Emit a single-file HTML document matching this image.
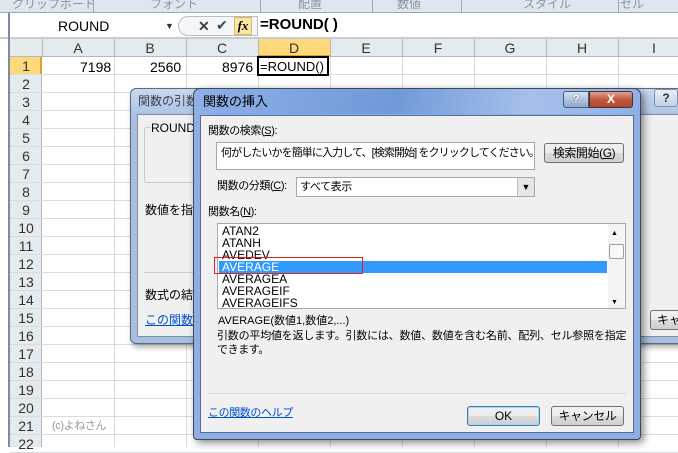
<!DOCTYPE html>
<html><head><meta charset="utf-8"><style>
*{margin:0;padding:0;box-sizing:border-box}
body{width:678px;height:447px;overflow:hidden;background:#fff;font-family:"Liberation Sans","Noto Sans CJK JP",sans-serif;font-size:12px;color:#000;position:relative}
.a{position:absolute}
.t{position:absolute;white-space:nowrap;line-height:14px}
.j{font-size:11px;letter-spacing:-0.4px}
.btn{position:absolute;border:1px solid #707070;border-radius:3px;background:linear-gradient(#f2f2f2,#ebebeb 50%,#dddddd 51%,#cfcfcf);text-align:center;font-size:12px}
</style></head><body>
<div class="a" style="left:0;top:0;width:678px;height:13px;background:#dfe6ee;border-bottom:1px solid #a0a8b2"></div>
<div class="t" style="left:12px;top:-3px;color:#8a94a0">クリップボード</div>
<div class="t" style="left:150px;top:-3px;color:#8a94a0">フォント</div>
<div class="t" style="left:298px;top:-3px;color:#8a94a0">配置</div>
<div class="t" style="left:397px;top:-3px;color:#8a94a0">数値</div>
<div class="t" style="left:523px;top:-3px;color:#8a94a0">スタイル</div>
<div class="t" style="left:620px;top:-3px;color:#8a94a0">セル</div>
<div class="a" style="left:93px;top:0;width:1px;height:13px;background:#a0a8b2"></div>
<div class="a" style="left:260px;top:0;width:1px;height:13px;background:#a0a8b2"></div>
<div class="a" style="left:372px;top:0;width:1px;height:13px;background:#a0a8b2"></div>
<div class="a" style="left:461px;top:0;width:1px;height:13px;background:#a0a8b2"></div>
<div class="a" style="left:618px;top:0;width:1px;height:13px;background:#a0a8b2"></div>
<div class="a" style="left:0;top:13px;width:678px;height:26px;background:#fff;border-bottom:2px solid #c8ccd2"></div>
<div class="a" style="left:8px;top:13px;width:2px;height:434px;background:#7f8ba0"></div>
<div class="t" style="left:58px;top:19px;font-size:14px">ROUND</div>
<div class="t" style="left:165px;top:19px;font-size:9px;color:#333">▼</div>
<div class="a" style="left:178px;top:16px;width:80px;height:20px;border:1px solid #b8bec8;border-radius:10px 0 0 10px;background:#f4f6f8"></div>
<div class="t" style="left:198px;top:19px;font-size:14px;color:#444;font-weight:bold">✕</div>
<div class="t" style="left:216px;top:18px;font-size:14px;color:#444">✔</div>
<div class="a" style="left:234px;top:17px;width:18px;height:18px;background:#fbe7a1;border:1px solid #d8b860;font-family:'Liberation Serif',serif;font-style:italic;font-weight:bold;font-size:13px;text-align:center;line-height:16px">fx</div>
<div class="t" style="left:260px;top:18px;font-size:15px;font-weight:bold">=ROUND( )</div>
<div class="a" style="left:10px;top:39px;width:668px;height:18px;background:#e4eaee;border-bottom:1px solid #b0b8c0"></div>
<div class="a" style="left:258px;top:39px;width:72px;height:18px;background:#fcd97a;border-bottom:2px solid #e0a030"></div>
<div id="cols"></div>
<div class="a" style="left:10px;top:57px;width:32px;height:390px;background:#e4eaee;border-right:1px solid #b0b8c0"></div>
<div class="a" style="left:10px;top:57px;width:32px;height:18px;background:#fcd97a;border-right:2px solid #e0a030"></div>
<div id="grid"></div>
<div class="t" style="left:80px;top:60px;font-size:14px">7198</div>
<div class="t" style="left:150px;top:60px;font-size:14px">2560</div>
<div class="t" style="left:222px;top:60px;font-size:14px">8976</div>
<div class="a" style="left:257px;top:56px;width:72px;height:20px;border:2px solid #000"></div>
<div class="t" style="left:260px;top:60px;font-size:13px">=ROUND()</div>
<div class="t j" style="left:52px;top:419px;color:#999">(c)よねさん</div>
<div class="a" style="left:130px;top:88px;width:560px;height:256px;background:#a9bfdf;border:1px solid #5a6a80;border-radius:6px;box-shadow:2px 3px 6px rgba(0,0,0,.35)"></div>
<div class="a" style="left:131px;top:89px;width:560px;height:24px;background:linear-gradient(#c9d8ee,#b0c6e6);border-radius:6px 6px 0 0"></div>
<div class="t" style="left:138px;top:94px;color:#3a4050">関数の引数</div>
<div class="a" style="left:137px;top:114px;width:550px;height:223px;background:#f0f0f0;border:1px solid #8090a8"></div>
<div class="a" style="left:144px;top:127px;width:60px;height:56px;border:1px solid #c8c8c8;border-radius:3px"></div>
<div class="t" style="left:150px;top:121px;background:#f0f0f0;padding:0 1px">ROUND</div>
<div class="t" style="left:145px;top:203px">数値を指定</div>
<div class="a" style="left:144px;top:272px;width:50px;height:1px;background:#d0d0d0"></div>
<div class="t" style="left:145px;top:288px">数式の結果</div>
<div class="t" style="left:145px;top:313px;color:#0050d0;text-decoration:underline">この関数の</div>
<div class="btn" style="left:650px;top:310px;width:40px;height:20px;line-height:18px;text-align:left;padding-left:6px">キャ</div>
<div class="a" style="left:654px;top:89px;width:24px;height:18px;background:linear-gradient(#e8eef8,#c4d2e6);border:1px solid #8090a8;border-radius:3px;font-weight:bold;text-align:center;line-height:16px;color:#333">?</div>
<div class="a" style="left:193px;top:88px;width:448px;height:352px;background:#8eaee2;border:1px solid #404858;border-radius:7px 7px 4px 4px;box-shadow:3px 3px 8px rgba(0,0,0,.45)"></div>
<div class="a" style="left:194px;top:89px;width:446px;height:25px;background:linear-gradient(100deg,#8fb0e8,#6f9ad8 45%,#a6c0ea 75%,#8fb0e6);border-radius:7px 7px 0 0"></div>
<div class="t" style="left:203px;top:95px;font-size:13px">関数の挿入</div>
<div class="a" style="left:563px;top:91px;width:26px;height:17px;background:linear-gradient(#d4e0f4,#8fa8d0);border:1px solid #4a5a78;border-radius:3px 0 0 3px;font-weight:bold;text-align:center;line-height:15px;color:#fff;text-shadow:0 0 1px #000">?</div>
<div class="a" style="left:589px;top:91px;width:44px;height:17px;background:linear-gradient(#e0a090,#c05a40 50%,#b04830);border:1px solid #4a3030;border-radius:0 3px 3px 0;font-weight:bold;text-align:center;line-height:15px;color:#fff">X</div>
<div class="a" style="left:200px;top:115px;width:434px;height:318px;background:#f0f0f0;border:1px solid #5070a0"></div>
<div class="t j" style="left:208px;top:124px">関数の検索(<u>S</u>):</div>
<div class="a" style="left:216px;top:142px;width:319px;height:28px;background:#fff;border:1px solid #a8a8a8"></div>
<div class="t j" style="left:221px;top:146px;letter-spacing:-0.9px">何がしたいかを簡単に入力して、[検索開始] をクリックしてください。</div>
<div class="btn j" style="left:544px;top:143px;width:80px;height:20px;line-height:18px">検索開始(<u>G</u>)</div>
<div class="t j" style="left:217px;top:179px">関数の分類(<u>C</u>):</div>
<div class="a" style="left:296px;top:177px;width:239px;height:20px;background:#fff;border:1px solid #a8a8a8"></div>
<div class="t j" style="left:300px;top:180px">すべて表示</div>
<div class="a" style="left:517px;top:178px;width:17px;height:18px;background:#e6e6e6;border-left:1px solid #c0c0c0;font-size:9px;text-align:center;line-height:18px">▼</div>
<div class="t j" style="left:208px;top:205px">関数名(<u>N</u>):</div>
<div class="a" style="left:217px;top:223px;width:409px;height:86px;background:#fff;border:1px solid #a0a8b0"></div>
<div class="a" style="left:219px;top:261px;width:388px;height:12px;background:#3399ff"></div>
<div class="a" style="left:608px;top:224px;width:17px;height:84px;background:#f4f4f4"></div>
<div class="t" style="left:611px;top:227px;font-size:7px">▲</div>
<div class="t" style="left:611px;top:296px;font-size:7px">▼</div>
<div class="a" style="left:609px;top:244px;width:15px;height:15px;background:#f8f8f8;border:1px solid #a0a0a0;border-radius:2px"></div>
<div class="t" style="left:222px;top:225px;line-height:12px">ATAN2<br>ATANH<br>AVEDEV<br><span style="color:#fff">AVERAGE</span><br>AVERAGEA<br>AVERAGEIF<br>AVERAGEIFS</div>
<div class="a" style="left:214px;top:257px;width:149px;height:17px;border:1px solid #e02020"></div>
<div class="t j" style="left:218px;top:314px;letter-spacing:0">AVERAGE(数値1,数値2,...)</div>
<div class="t j" style="left:217px;top:329px;letter-spacing:-0.2px">引数の平均値を返します。引数には、数値、数値を含む名前、配列、セル参照を指定</div>
<div class="t j" style="left:217px;top:343px">できます。</div>
<div class="a" style="left:208px;top:393px;width:418px;height:1px;background:#d8d8d8"></div>
<div class="t j" style="left:208px;top:406px;color:#0050d0;text-decoration:underline">この関数のヘルプ</div>
<div class="btn" style="left:467px;top:406px;width:73px;height:20px;line-height:18px;border-color:#3c7fb1;box-shadow:inset 0 0 0 1px #a8d8f0">OK</div>
<div class="btn j" style="left:551px;top:406px;width:73px;height:20px;line-height:18px">キャンセル</div>
<script>
var c='',g='',L='ABCDEFGHI';
for(var i=0;i<9;i++){var x=42+72*i;c+='<div class="a" style="left:'+x+'px;top:39px;width:1px;height:18px;background:#b0b8c0"></div><div class="t" style="left:'+x+'px;top:41px;width:72px;text-align:center;font-size:14px;color:#333">'+L[i]+'</div>';
g+='<div class="a" style="left:'+(x+72)+'px;top:57px;width:1px;height:390px;background:#d8dcdf"></div>';}
for(var r=1;r<23;r++){var y=57+(r-1)*18;g+='<div class="a" style="left:10px;top:'+(y+17)+'px;width:668px;height:1px;background:#d8dcdf"></div><div class="t" style="left:10px;top:'+(y+2)+'px;width:32px;text-align:center;font-size:14px;color:#333">'+r+'</div>';}
document.getElementById('cols').outerHTML=c;document.getElementById('grid').outerHTML=g;
</script>
</body></html>
